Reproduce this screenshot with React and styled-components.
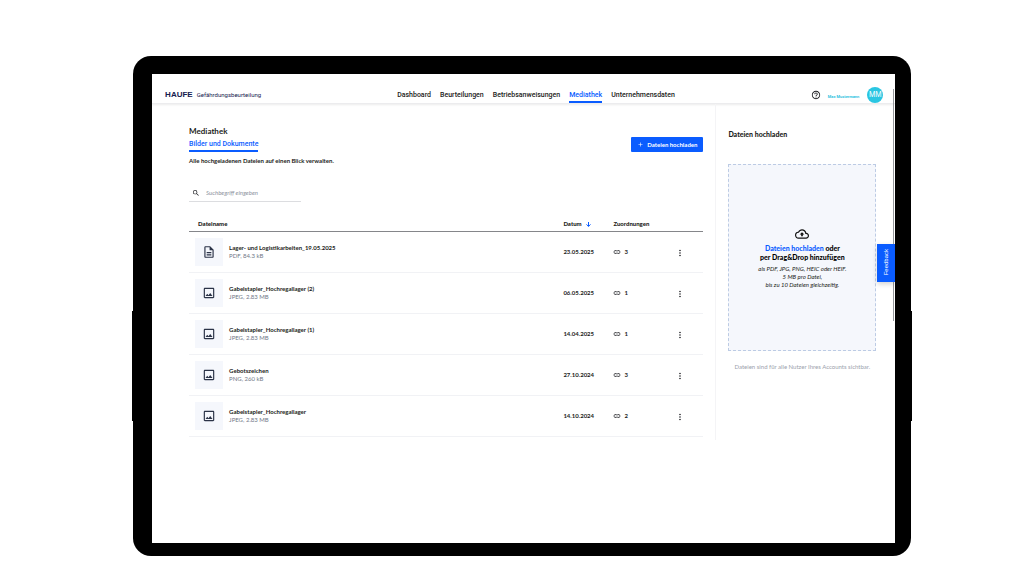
import React from "react";
import styled, { createGlobalStyle } from "styled-components";
import {
  MdHelpOutline,
  MdSearch,
  MdOutlineDescription,
  MdOutlineImage,
  MdMoreVert,
  MdLink,
  MdOutlineCloudUpload,
  MdAdd,
} from "react-icons/md";

const blue = "#0a5cff";
const ink = "#1b1c20";

const GlobalStyle = createGlobalStyle`
  *, *::before, *::after { box-sizing: border-box; }
  body {
    margin: 0;
    background: #fff;
    color: ${ink};
    font-family: Lato, "Open Sans", sans-serif;
    font-size: 6px;
    line-height: 8px;
  }
  h1, h2, p { margin: 0; }
  button, input { font: inherit; color: inherit; border: 0; margin: 0; padding: 0; background: none; }
  button { cursor: pointer; }
  a { color: inherit; text-decoration: none; }
  svg { display: block; flex: none; }
`;

const Page = styled.div`
  padding: 56px 11% 29px 13%;
`;

const Device = styled.div`
  position: relative;
  background: #000;
  border-radius: 18px;
  padding: 18px 16px 13px 19px;
  &::before, &::after {
    content: "";
    position: absolute;
    top: 51%;
    height: 22%;
    width: 1px;
    background: #000;
  }
  &::before { left: -1px; }
  &::after { right: -1px; }
`;

const Screen = styled.div`
  position: relative;
  background: #fff;
  min-height: 469px;
`;

const Header = styled.header`
  display: flex;
  align-items: center;
  justify-content: space-between;
  height: 30px;
  padding: 12px 12px 0 13px;
  border-bottom: 1px solid #ececee;
  box-shadow: 0 1px 2px rgba(0, 0, 0, 0.08);
`;

const Brand = styled.a`
  display: flex;
  align-items: center;
  gap: 4px;
  color: #16204f;
  font-family: Roboto, sans-serif;
  font-size: 6px;
`;

const BrandName = styled.span`
  font-family: "Liberation Sans", sans-serif;
  font-size: 8px;
  font-weight: 700;
`;

const Nav = styled.nav`
  display: flex;
  gap: 9px;
  align-self: stretch;
`;

const NavLink = styled.a`
  display: flex;
  align-items: center;
  font-family: Roboto, sans-serif;
  font-size: 7px;
  font-weight: 500;
  padding-top: 3px;
  color: ${(p) => (p.$active ? blue : ink)};
  border-bottom: 2px solid ${(p) => (p.$active ? blue : "transparent")};
`;

const Account = styled.div`
  display: flex;
  align-items: center;
  gap: 7px;
  font-size: 10px;
`;

const IconButton = styled.button`
  display: inline-flex;
  align-items: center;
  justify-content: center;
  font-size: 10px;
`;

const UserName = styled.span`
  color: #2fc3e0;
  font-family: Roboto, sans-serif;
  font-size: 4px;
  font-weight: 700;
  padding: 4px 1px 0 0;
`;

const Avatar = styled.span`
  display: flex;
  align-items: center;
  justify-content: center;
  width: 16px;
  height: 16px;
  border-radius: 50%;
  background: #2ac6e2;
  color: #fff;
  font-family: Inter, sans-serif;
  font-size: 7px;
`;

const Body = styled.div`
  display: flex;
  min-height: 336px;
`;

const Main = styled.main`
  flex: 1;
  min-width: 0;
  padding: 22px 12px 0 37px;
`;

const TitleRow = styled.div`
  display: flex;
  justify-content: space-between;
  align-items: flex-end;
`;

const Title = styled.h1`
  font-size: 8px;
  line-height: 10px;
  font-weight: 700;
`;

const Tab = styled.a`
  display: inline-block;
  margin-top: 4px;
  padding-bottom: 1px;
  font-family: Roboto, sans-serif;
  font-size: 7px;
  line-height: 9px;
  font-weight: 500;
  color: ${blue};
  border-bottom: 2px solid ${blue};
`;

const UploadButton = styled.button`
  display: flex;
  align-items: center;
  gap: 3px;
  height: 15px;
  padding: 0 6px;
  border-radius: 1px;
  background: ${blue};
  color: #fff;
  font-weight: 700;
`;

const Intro = styled.p`
  margin-top: 5px;
  font-weight: 700;
`;

const Search = styled.label`
  display: flex;
  align-items: center;
  gap: 6px;
  width: 112px;
  height: 16px;
  margin-top: 21px;
  padding: 0 0 2px 3px;
  border-bottom: 1px solid #dcdde0;
  font-size: 8px;
`;

const SearchInput = styled.input`
  flex: 1;
  min-width: 0;
  font-size: 6px;
  font-style: italic;
  outline: none;
  &::placeholder { color: #8b919c; opacity: 1; }
`;

const Table = styled.table`
  width: 100%;
  margin-top: 15px;
  table-layout: fixed;
  border-collapse: collapse;
`;

const Th = styled.th`
  width: ${(p) => p.$width || "auto"};
  height: 14px;
  padding: 1px 0 0 ${(p) => p.$inset || 0};
  border-bottom: 1px solid #85868a;
  text-align: left;
  font-weight: 900;
`;

const Td = styled.td`
  height: 41px;
  padding: ${(p) => p.$drop || 0} 0 0 ${(p) => p.$inset || 0};
  border-bottom: 1px solid #f1f2f5;
  font-weight: 700;
`;

const Inline = styled.span`
  display: flex;
  align-items: center;
  gap: ${(p) => p.$gap}px;
`;

const SortArrow = styled.svg`
  width: 5px;
  height: 5px;
  fill: none;
  stroke: ${blue};
`;

const Thumb = styled.span`
  display: flex;
  align-items: center;
  justify-content: center;
  width: 28px;
  height: 28px;
  background: #f5f7fc;
  color: #2b3347;
  font-size: 14px;
`;

const FileMeta = styled.span`
  display: block;
  color: #717887;
  font-weight: 400;
`;

const Aside = styled.aside`
  width: 180px;
  padding: 26px 19px 0 12px;
  border-left: 1px solid #f4f4f6;
`;

const AsideTitle = styled.h2`
  font-size: 7px;
  line-height: 9px;
  font-weight: 900;
`;

const DropZone = styled.section`
  display: flex;
  flex-direction: column;
  align-items: center;
  height: 187px;
  margin-top: 25px;
  padding-top: 62px;
  border: 1px dashed #bccbe4;
  background: #f5f7fc;
  text-align: center;
`;

const DropText = styled.p`
  margin-top: 3px;
  font-size: 7px;
  line-height: 9px;
  font-weight: 900;
  color: #000;
`;

const DropLink = styled.button`
  color: ${blue};
`;

const DropHint = styled.p`
  margin-top: 3px;
  font-style: italic;
`;

const AsideNote = styled.p`
  margin-top: 12px;
  text-align: center;
  color: #9ba1ac;
`;

const ScrollThumb = styled.div`
  position: absolute;
  top: 15px;
  right: 1px;
  width: 1px;
  height: 232px;
  background: #96989c;
`;

const Feedback = styled.button`
  position: absolute;
  top: 170px;
  right: 0;
  width: 18px;
  height: 38px;
  background: ${blue};
  color: #fff;
  font-family: "Liberation Sans", sans-serif;
  font-size: 6px;
  box-shadow: 0 2px 5px rgba(0, 0, 0, 0.18);
`;

const FeedbackLabel = styled.span`
  display: inline-block;
  writing-mode: vertical-rl;
  transform: rotate(180deg);
`;

const navItems = ["Dashboard", "Beurteilungen", "Betriebsanweisungen", "Mediathek", "Unternehmensdaten"];

const files = [
  { name: "Lager- und Logistikarbeiten_19.05.2025", meta: "PDF, 84.3 kB", date: "23.05.2025", links: 3, icon: MdOutlineDescription },
  { name: "Gabelstapler_Hochregallager (2)", meta: "JPEG, 2.83 MB", date: "06.05.2025", links: 1, icon: MdOutlineImage },
  { name: "Gabelstapler_Hochregallager (1)", meta: "JPEG, 2.83 MB", date: "14.04.2025", links: 1, icon: MdOutlineImage },
  { name: "Gebotszeichen", meta: "PNG, 260 kB", date: "27.10.2024", links: 3, icon: MdOutlineImage },
  { name: "Gabelstapler_Hochregallager", meta: "JPEG, 2.83 MB", date: "14.10.2024", links: 2, icon: MdOutlineImage },
];

function FileRow({ file }) {
  const Icon = file.icon;
  return (
    <tr>
      <Td $inset="6px">
        <Inline $gap={6}>
          <Thumb><Icon /></Thumb>
          <span>
            {file.name}
            <FileMeta>{file.meta}</FileMeta>
          </span>
        </Inline>
      </Td>
      <Td>{file.date}</Td>
      <Td><Inline $gap={3}><MdLink size={8} />{file.links}</Inline></Td>
      <Td $inset="12px" $drop="4px">
        <IconButton aria-label={`Aktionen für ${file.name}`}><MdMoreVert /></IconButton>
      </Td>
    </tr>
  );
}

export default function App() {
  return (
    <Page>
      <GlobalStyle />
      <Device>
        <Screen>
          <Header>
            <Brand href="#"><BrandName>HAUFE</BrandName>Gefährdungsbeurteilung</Brand>
            <Nav>
              {navItems.map((item) => (
                <NavLink key={item} href="#" $active={item === "Mediathek"}>{item}</NavLink>
              ))}
            </Nav>
            <Account>
              <IconButton aria-label="Hilfe"><MdHelpOutline /></IconButton>
              <UserName>Max Mustermann</UserName>
              <Avatar>MM</Avatar>
            </Account>
          </Header>
          <Body>
            <Main>
              <TitleRow>
                <div>
                  <Title>Mediathek</Title>
                  <Tab href="#">Bilder und Dokumente</Tab>
                </div>
                <UploadButton><MdAdd size={7} />Dateien hochladen</UploadButton>
              </TitleRow>
              <Intro>Alle hochgeladenen Dateien auf einen Blick verwalten.</Intro>
              <Search>
                <MdSearch />
                <SearchInput type="search" aria-label="Suche" placeholder="Suchbegriff eingeben" />
              </Search>
              <Table>
                <thead>
                  <tr>
                    <Th $inset="9px">Dateiname</Th>
                    <Th $width="50px">
                      <Inline $gap={4}>
                        Datum
                        <SortArrow viewBox="0 0 5 5" aria-hidden="true">
                          <path d="M2.5 0v4.4M0.5 2.4l2 2 2-2" />
                        </SortArrow>
                      </Inline>
                    </Th>
                    <Th $width="50px">Zuordnungen</Th>
                    <Th $width="40px" aria-label="Aktionen" />
                  </tr>
                </thead>
                <tbody>
                  {files.map((file) => <FileRow key={file.name} file={file} />)}
                </tbody>
              </Table>
            </Main>
            <Aside>
              <AsideTitle>Dateien hochladen</AsideTitle>
              <DropZone>
                <MdOutlineCloudUpload size={14} color="#111" />
                <DropText><DropLink>Dateien hochladen</DropLink> oder<br />per Drag&amp;Drop hinzufügen</DropText>
                <DropHint>als PDF, JPG, PNG, HEIC oder HEIF.<br />5 MB pro Datei,<br />bis zu 10 Dateien gleichzeitig.</DropHint>
              </DropZone>
              <AsideNote>Dateien sind für alle Nutzer Ihres Accounts sichtbar.</AsideNote>
            </Aside>
          </Body>
          <ScrollThumb />
          <Feedback><FeedbackLabel>Feedback</FeedbackLabel></Feedback>
        </Screen>
      </Device>
    </Page>
  );
}
